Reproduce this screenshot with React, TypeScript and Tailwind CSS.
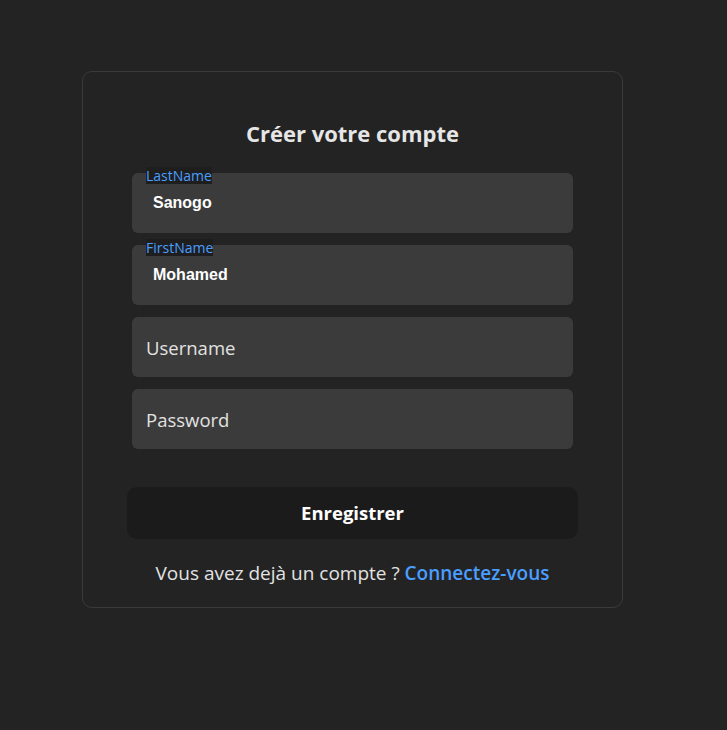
import React from 'react';

function FilledField({ label, value }: { label: string; value: string }) {
  return (
    <div className="relative">
      <span className="absolute left-[14px] top-[-6px] bg-[#1e1e1e] text-[14px] leading-[17px] text-[#4a9eff] [font-family:'Open_Sans',sans-serif]">
        {label}
      </span>
      <input
        readOnly
        defaultValue={value}
        className="h-[60px] w-full rounded-md bg-[#3b3b3b] pl-[21px] text-[16px] font-bold text-white outline-none [font-family:'Liberation_Sans',Arial,sans-serif]"
      />
    </div>
  );
}

function EmptyField({ placeholder, type = 'text' }: { placeholder: string; type?: string }) {
  return (
    <input
      type={type}
      placeholder={placeholder}
      className="h-[60px] w-full rounded-md bg-[#3b3b3b] px-[14px] text-[18.5px] text-white outline-none placeholder:text-[#e2e2e2] [font-family:'Open_Sans',sans-serif]"
    />
  );
}

export default function App() {
  return (
    <div className="min-h-[730px] bg-[#232323] pt-[71px] [font-family:'Open_Sans',sans-serif]">
      <div className="ml-[82px] w-[541px] rounded-[10px] border border-[#3a3a3a] px-[49px] pb-[22px] pt-[47px]">
        <h1 className="text-center text-[22px] font-bold leading-[28px] text-[#e6e6e6]">Créer votre compte</h1>
        <div className="mt-[26px] flex flex-col gap-[12px]">
          <FilledField label="LastName" value="Sanogo" />
          <FilledField label="FirstName" value="Mohamed" />
          <EmptyField placeholder="Username" />
          <EmptyField placeholder="Password" type="password" />
        </div>
        <button className="mx-[-5px] mt-[38px] h-[52px] w-[calc(100%+10px)] rounded-[10px] bg-[#1b1b1b] text-[18.5px] font-bold text-white">
          Enregistrer
        </button>
        <p className="mt-[22px] text-center text-[19px] leading-[24px] text-[#e2e2e2]">
          Vous avez dejà un compte ?{' '}
          <a href="#" className="font-semibold text-[#4a9eff]">
            Connectez-vous
          </a>
        </p>
      </div>
    </div>
  );
}
